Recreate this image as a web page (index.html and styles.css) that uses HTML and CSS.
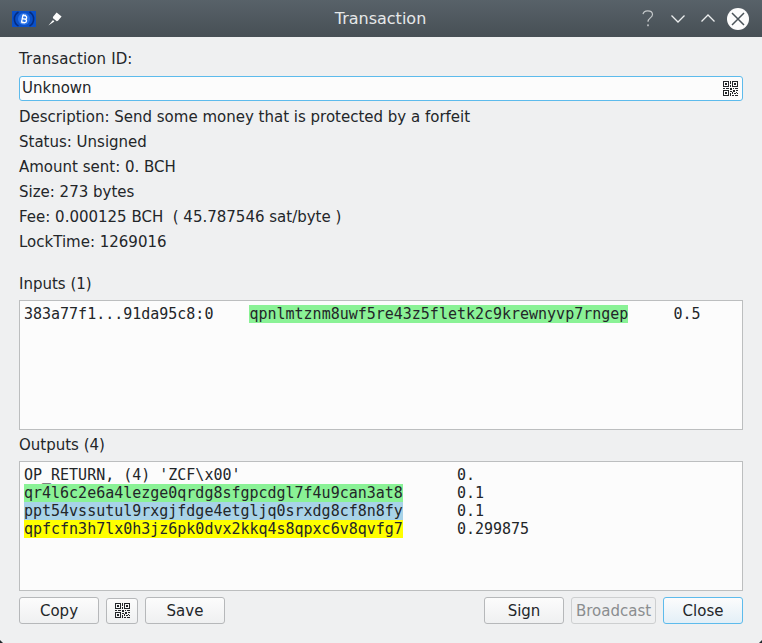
FILE: index.html
```html
<!DOCTYPE html>
<html lang="en">
<head>
  <meta charset="UTF-8">
  <meta name="viewport" content="width=device-width, initial-scale=1.0">
  <title>Transaction</title>
  <link rel="stylesheet" href="styles.css">
</head>
<body>

  <!-- QR glyph, reused by the id field and the button row -->
  <svg class="defs" width="0" height="0">
    <symbol id="qr" viewBox="0 0 15 15">
      <path d="M0 0h6v6H0zM1 1v4h4V1zM2 2h2v2H2zM9 0h6v6H9zM10 1v4h4V1zM11 2h2v2h-2zM0 9h6v6H0zM1 10v4h4v-4zM2 11h2v2H2z" fill-rule="evenodd"/>
      <path d="M7 0h1v3H7zM7 4h1v2H7zM0 7h2v1H0zM3 7h3v1H3zM7 7h2v2H7zM10 7h1v1h-1zM12 7h3v1h-3zM7 10h2v1H7zM10 9h2v2h-2zM13 9h2v1h-2zM9 11h1v2H9zM11 12h2v1h-2zM13 11h1v1h-1zM7 12h1v3H7zM9 14h2v1H9zM12 14h3v-1h-1v-1h1v3h-3z"/>
    </symbol>
  </svg>

  <div class="titlebar">
    <div class="title-left">
      <svg class="app-icon" width="24" height="16" viewBox="0 0 24 16">
        <rect width="24" height="16" fill="#0a50c8"/>
        <path d="M6.5 1a8 8 0 0 0 0 14M17.5 1a8 8 0 0 1 0 14" fill="none" stroke="#062c80" stroke-width="1.6"/>
        <circle cx="12" cy="8" r="6" fill="#2a72e6"/>
        <g transform="rotate(12 12 8)">
          <path d="M10.2 4.6h2.5a1.6 1.6 0 0 1 0 3.3h-2.5zM10.2 7.9h2.9a1.75 1.75 0 0 1 0 3.5h-2.9zM11 3.5v1.2M12.7 3.5v1.2M11 11.4v1.2M12.7 11.4v1.2" fill="none" stroke="#fff" stroke-width="1.3"/>
        </g>
      </svg>
      <svg class="pin-icon" width="16" height="16" viewBox="0 0 16 16">
        <path d="M9.6 1.4l5 4-3.6 4.4-1.2.4-3.8-3-.1-1.3zM6 9L1.4 14.6 7.4 10.4z" fill="#fcfcfc"/>
      </svg>
    </div>
    <div class="title-text">Transaction</div>
    <div class="title-right">
      <svg class="help-btn" width="12" height="17" viewBox="0 0 12 17">
        <path d="M1 4.2C1.4 2 3.2.8 5.6.8c2.8 0 4.9 1.5 4.9 3.7 0 3.4-4.5 3.4-4.5 7.2" fill="none" stroke="#c4c8ca" stroke-width="1.2"/>
        <rect x="5.2" y="14.4" width="1.6" height="1.8" fill="#c4c8ca"/>
      </svg>
      <svg class="chevron-down" width="16" height="10" viewBox="0 0 16 10"><path d="M1.5 1.5L8 8l6.5-6.5" class="chevron"/></svg>
      <svg class="chevron-up" width="16" height="10" viewBox="0 0 16 10"><path d="M1.5 8.5L8 2l6.5 6.5" class="chevron"/></svg>
      <svg class="close-btn" width="22" height="22" viewBox="0 0 22 22">
        <circle cx="11" cy="11" r="11" fill="#fcfcfc"/>
        <path d="M5 5l12 12M17 5L5 17" stroke="#4a5359" stroke-width="1.5" fill="none"/>
      </svg>
    </div>
  </div>

  <div class="content">
    <div class="label id-label">Transaction ID:</div>
    <div class="id-field">
      <span>Unknown</span>
      <svg class="qr" width="15" height="15"><use href="#qr"/></svg>
    </div>

    <div class="info">
      <div class="info-row">Description: Send some money that is protected by a forfeit</div>
      <div class="info-row">Status: Unsigned</div>
      <div class="info-row">Amount sent: 0. BCH</div>
      <div class="info-row">Size: 273 bytes</div>
      <div class="info-row">Fee: 0.000125 BCH&nbsp; ( 45.787546 sat/byte )</div>
      <div class="info-row">LockTime: 1269016</div>
    </div>

    <div class="label inputs-label">Inputs (1)</div>
    <pre class="tx-box">383a77f1...91da95c8:0    <span class="hl-green">qpnlmtznm8uwf5re43z5fletk2c9krewnyvp7rngep</span>     0.5</pre>

    <div class="label outputs-label">Outputs (4)</div>
    <pre class="tx-box">OP_RETURN, (4) 'ZCF\x00'                        0.
<span class="hl-green">qr4l6c2e6a4lezge0qrdg8sfgpcdgl7f4u9can3at8</span>      0.1
<span class="hl-blue">ppt54vssutul9rxgjfdge4etgljq0srxdg8cf8n8fy</span>      0.1
<span class="hl-yellow">qpfcfn3h7lx0h3jz6pk0dvx2kkq4s8qpxc6v8qvfg7</span>      0.299875</pre>

    <div class="buttons">
      <button class="btn">Copy</button>
      <button class="btn btn-qr"><svg class="qr" width="15" height="15"><use href="#qr"/></svg></button>
      <button class="btn">Save</button>
      <div class="spacer"></div>
      <button class="btn">Sign</button>
      <button class="btn btn-disabled" disabled>Broadcast</button>
      <button class="btn btn-focus">Close</button>
    </div>
  </div>

  <!-- bits of the desktop showing through the window corners -->
  <div class="corner corner-left"></div>
  <div class="corner corner-right"></div>

</body>
</html>
```

FILE: styles.css
```css
body {
  position: relative;
  font-family: "DejaVu Sans", sans-serif;
  font-size: 15px;
  color: #232629;
  background-color: #eff0f1;
  margin: 0;
  width: 762px;
  height: 643px;
  overflow: hidden;
}

.defs {
  display: block;
  height: 0;
}

.titlebar {
  height: 37px;
  display: flex;
  align-items: center;
  justify-content: space-between;
  padding: 0 13px 0 12px;
  background: linear-gradient(#586269, #474f55);
  color: #fcfcfc;
}

.title-left {
  display: flex;
  align-items: center;
  gap: 11px;
  width: 200px;
}

.title-text {
  font-size: 16px;
  color: #e6e8e9;
}

.title-right {
  display: flex;
  align-items: center;
  justify-content: flex-end;
  width: 200px;
}

.help-btn {
  margin-right: 16px;
}

.chevron-down {
  margin-right: 14px;
  margin-top: 1px;
}

.chevron-up {
  margin-right: 11px;
  margin-top: -1px;
}

.chevron {
  fill: none;
  stroke: #eceeef;
  stroke-width: 1.3;
}

.content {
  padding: 0 19px;
}

.label {
  line-height: 18px;
}

.id-label {
  padding-top: 13px;
  letter-spacing: 0.13px;
}

.id-field {
  margin-top: 8px;
  height: 25px;
  box-sizing: border-box;
  display: flex;
  align-items: center;
  justify-content: space-between;
  padding: 0 4px 2px 2px;
  background-color: #fcfcfc;
  border: 1px solid #5dbbec;
  border-radius: 3px;
}

.id-field .qr {
  margin-top: 2px;
}

.qr {
  fill: #232629;
  display: block;
}

.info {
  margin-top: 4px;
}

.info-row {
  height: 25px;
  line-height: 25px;
}

.inputs-label {
  margin-top: 20px;
}

.outputs-label {
  margin-top: 6px;
}

.tx-box {
  margin: 7px 0 0;
  height: 130px;
  box-sizing: border-box;
  padding: 4px;
  background-color: #fcfcfc;
  border: 1px solid #bcbebf;
  font-family: "DejaVu Sans Mono", monospace;
  font-size: 15px;
  letter-spacing: -0.012px;
  line-height: 18px;
  color: #232629;
}

.hl-green,
.hl-blue,
.hl-yellow {
  display: inline-block;
}

.hl-green {
  background-color: #8af296;
}

.hl-blue {
  background-color: #a8d3e8;
}

.hl-yellow {
  background-color: #ffff00;
}

.buttons {
  display: flex;
  align-items: center;
  margin-top: 6px;
  gap: 7px;
}

.spacer {
  flex: 1;
}

.btn {
  width: 80px;
  height: 27px;
  box-sizing: border-box;
  padding: 0;
  font-family: inherit;
  font-size: 15px;
  color: #232629;
  background: linear-gradient(#fcfcfc, #eff0f1);
  border: 1px solid #b6b8ba;
  border-radius: 3px;
}

.btn-qr {
  width: 32px;
  height: 26px;
  display: flex;
  align-items: center;
  justify-content: center;
}

.btn-disabled {
  width: 85px;
  color: #8a8d8f;
  background: #eff0f1;
  border-color: #cdcfd0;
}

.btn-focus {
  background: linear-gradient(#fcfcfc, #e3eff7);
  border-color: #5dbbec;
}

.corner {
  position: absolute;
  bottom: 0;
  width: 3px;
  height: 3px;
  background-color: #20282c;
}

.corner-left {
  left: 0;
  clip-path: polygon(0 0, 100% 100%, 0 100%);
}

.corner-right {
  right: 0;
  clip-path: polygon(100% 0, 100% 100%, 0 100%);
}
```
